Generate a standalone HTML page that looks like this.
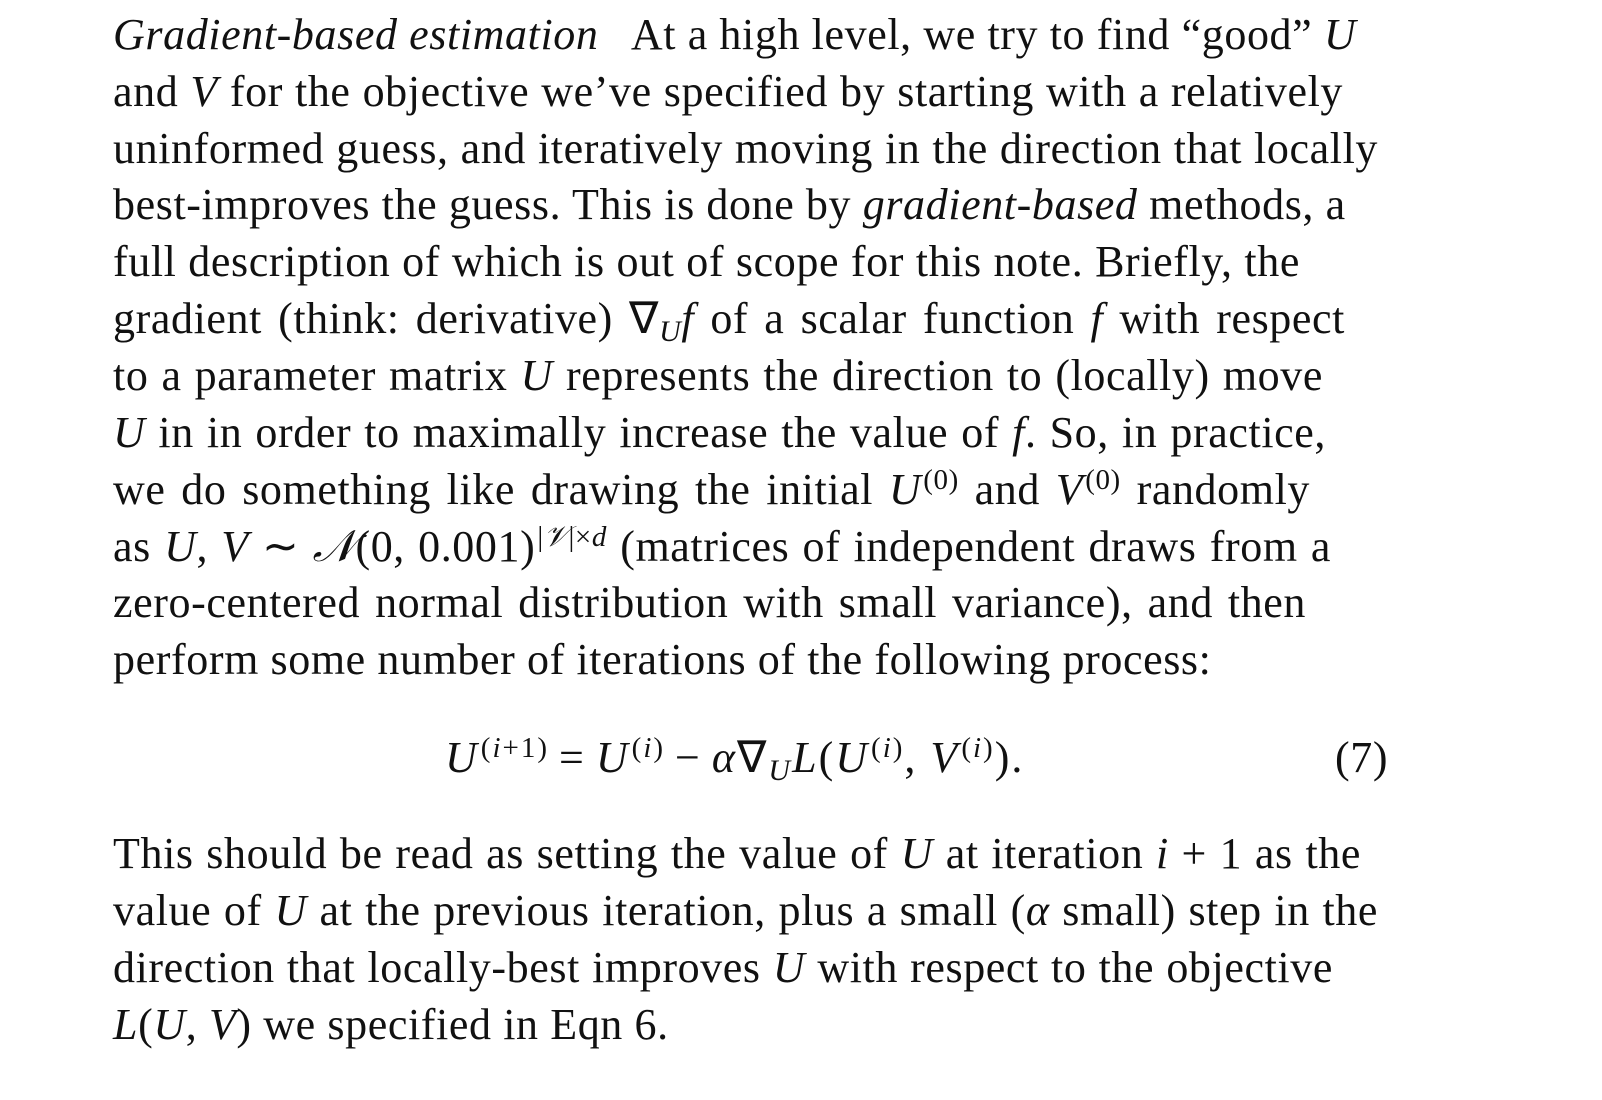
<!DOCTYPE html>
<html><head><meta charset="utf-8"><style>
html,body{margin:0;padding:0;background:#fff;}
body{width:1602px;height:1100px;position:relative;overflow:hidden;font-family:"Liberation Serif",serif;color:#111;font-size:44px;letter-spacing:0.6px;}
.l{position:absolute;left:113px;height:57px;line-height:57px;white-space:nowrap;text-align:justify;text-align-last:justify;}
.n{text-align:left;text-align-last:left;}
i{font-style:italic;}
sup{font-size:29px;line-height:0;vertical-align:15px;margin-left:2px;}
sub{font-size:30px;line-height:0;vertical-align:-8px;font-style:italic;}
.op{margin:0 10px;}
</style></head><body>
<div class="l" style="top:6px;width:1214px"><i>Gradient-based estimation</i>&nbsp;&nbsp; At a high level, we try to find “good” <i>U</i></div>
<div class="l" style="top:63px;width:1230px">and <i>V</i> for the objective we’ve specified by starting with a relatively</div>
<div class="l" style="top:120px;width:1265px">uninformed guess, and iteratively moving in the direction that locally</div>
<div class="l" style="top:176px;width:1215px">best-improves the guess. This is done by <i>gradient-based</i> methods, a</div>
<div class="l" style="top:233px;width:1187px">full description of which is out of scope for this note. Briefly, the</div>
<div class="l" style="top:290px;width:1232px">gradient (think: derivative) ∇<sub>U</sub><i>f</i> of a scalar function <i>f</i> with respect</div>
<div class="l" style="top:347px;width:1210px">to a parameter matrix <i>U</i> represents the direction to (locally) move</div>
<div class="l" style="top:404px;width:1213px"><i>U</i> in in order to maximally increase the value of <i>f</i>. So, in practice,</div>
<div class="l" style="top:461px;width:1197px">we do something like drawing the initial <i>U</i><sup>(0)</sup> and <i>V</i><sup>(0)</sup> randomly</div>
<div class="l" style="top:518px;width:1218px">as <i>U</i>, <i>V</i> ∼ <i>𝒩</i>(0, 0.001)<sup>|<i>𝒱</i>|×<i>d</i></sup> (matrices of independent draws from a</div>
<div class="l" style="top:574px;width:1193px">zero-centered normal distribution with small variance), and then</div>
<div class="l" style="top:631px;width:1089px">perform some number of iterations of the following process:</div>
<div class="l n" style="top:729px;left:445px;letter-spacing:2px"><i>U</i><sup>(<i>i</i>+1)</sup><span class="op">=</span><i>U</i><sup>(<i>i</i>)</sup><span class="op">−</span><i>α</i>∇<sub>U</sub><i>L</i>(<i>U</i><sup>(<i>i</i>)</sup>, <i>V</i><sup>(<i>i</i>)</sup>).</div>
<div class="l n" style="top:729px;left:1335px">(7)</div>
<div class="l" style="top:825px;width:1248px">This should be read as setting the value of <i>U</i> at iteration <i>i</i> + 1 as the</div>
<div class="l" style="top:882px;width:1265px">value of <i>U</i> at the previous iteration, plus a small (<i>α</i> small) step in the</div>
<div class="l" style="top:939px;width:1220px">direction that locally-best improves <i>U</i> with respect to the objective</div>
<div class="l" style="top:996px;width:547px"><i>L</i>(<i>U</i>, <i>V</i>) we specified in Eqn 6.</div>
</body></html>
